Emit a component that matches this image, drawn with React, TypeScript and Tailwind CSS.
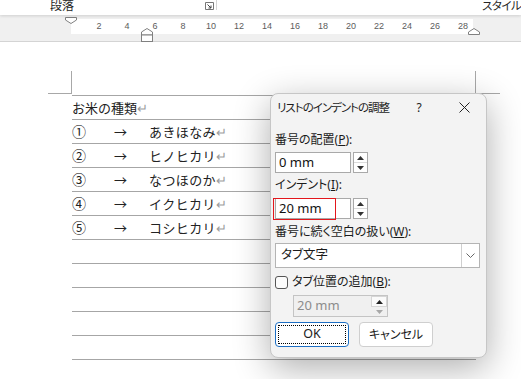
import React from "react";

const rulerNums = [2, 4, 6, 8, 10, 12, 14, 16, 18, 20, 22, 24, 26, 28];

const items = [
  { no: "①", name: "あきほなみ" },
  { no: "②", name: "ヒノヒカリ" },
  { no: "③", name: "なつほのか" },
  { no: "④", name: "イクヒカリ" },
  { no: "⑤", name: "コシヒカリ" },
];

function UpTri({ color = "#333" }: { color?: string }) {
  return (
    <svg width="7" height="4" viewBox="0 0 7 4" aria-hidden>
      <polygon points="0,4 3.5,0 7,4" fill={color} />
    </svg>
  );
}

function DownTri({ color = "#333" }: { color?: string }) {
  return (
    <svg width="7" height="4" viewBox="0 0 7 4" aria-hidden>
      <polygon points="0,0 7,0 3.5,4" fill={color} />
    </svg>
  );
}

function Spinner() {
  return (
    <div className="ml-[2px] flex h-[21px] w-[15px] flex-col border border-[#a9a9a9] bg-white">
      <div className="flex flex-1 items-center justify-center border-b border-[#dcdcdc]">
        <UpTri />
      </div>
      <div className="flex flex-1 items-center justify-center">
        <DownTri />
      </div>
    </div>
  );
}

function Field({ value, marked }: { value: string; marked?: boolean }) {
  return (
    <div className="relative flex">
      <div className="flex h-[21px] w-[76px] items-center border border-[#a9a9a9] bg-white pl-[3px] text-[13px] text-[#111]">
        {value}
      </div>
      <Spinner />
      {marked && (
        <div className="absolute left-[-2px] top-0 h-[22px] w-[63px] border-[1.5px] border-[#e3161c]" />
      )}
    </div>
  );
}

function Dialog() {
  return (
    <div className="absolute left-[270px] top-[93px] flex h-[265px] w-[217px] flex-col rounded-[8px] border border-[#c6c6c6] bg-[#f3f3f3] px-[4px] text-[12px] text-[#1b1b1b] shadow-[0_10px_36px_rgba(0,0,0,0.32)] [font-feature-settings:'palt'] font-['Noto_Sans','Noto_Sans_CJK_JP',sans-serif]">
      {/* title bar */}
      <div className="flex h-[27px] items-center">
        <span className="ml-[2px] flex-1 whitespace-nowrap text-[11.5px] tracking-[-1px]">リストのインデントの調整</span>
        <span className="w-[12px] text-center text-[12px]">?</span>
        <span className="ml-[25px] mr-[4px] flex w-[28px] items-center justify-center">
          <svg width="11" height="11" viewBox="0 0 11 11" aria-hidden>
            <path d="M0.5 0.5 L10.5 10.5 M10.5 0.5 L0.5 10.5" stroke="#222" strokeWidth="1" fill="none" />
          </svg>
        </span>
      </div>

      <div className="mt-[11px] h-[16px] leading-[16px]">
        番号の配置(<span className="underline">P</span>):
      </div>
      <div className="mt-[4px]">
        <Field value="0 mm" />
      </div>

      <div className="mt-[4px] h-[16px] leading-[16px]">
        インデント(<span className="underline">I</span>):
      </div>
      <div className="mt-[5px]">
        <Field value="20 mm" marked />
      </div>

      <div className="mt-[5px] h-[16px] leading-[16px]">
        番号に続く空白の扱い(<span className="underline">W</span>):
      </div>
      <div className="mt-[3px] flex h-[25px] w-[205px] border border-[#b4b4b4] bg-white">
        <div className="flex flex-1 items-center pl-[5px] text-[12.5px]">タブ文字</div>
        <div className="flex w-[18px] items-center justify-center border-l border-[#cfcfcf]">
          <svg width="9" height="5" viewBox="0 0 9 5" aria-hidden>
            <polyline points="0.5,0.5 4.5,4.5 8.5,0.5" stroke="#666" strokeWidth="1" fill="none" />
          </svg>
        </div>
      </div>

      <div className="mt-[6px] flex h-[16px] items-center">
        <div className="h-[13px] w-[13px] rounded-[3px] border border-[#555] bg-[#fbfbfb]" />
        <span className="ml-[4px] leading-[16px]">
          タブ位置の追加(<span className="underline">B</span>):
        </span>
      </div>

      <div className="ml-[18px] mt-[5px] flex h-[22px] w-[95px] border border-[#c4c4c4] bg-[#f0f0f0]">
        <div className="flex flex-1 items-center pl-[3px] text-[13px] text-[#8c8c8c]">20 mm</div>
        <div className="flex w-[16px] flex-col">
          <div className="flex flex-1 items-center justify-center border border-[#d6d6d6] bg-[#fafafa]">
            <UpTri color="#222" />
          </div>
          <div className="flex flex-1 items-center justify-center">
            <DownTri color="#a8a8a8" />
          </div>
        </div>
      </div>

      <div className="mt-[5px] flex">
        <div className="flex h-[25px] w-[74px] rounded-[4px] border border-[#1d6fc4] bg-white p-[2px]">
          <div className="flex flex-1 items-center justify-center border border-dotted border-black text-[12.5px]">
            OK
          </div>
        </div>
        <div className="ml-[10px] flex h-[25px] w-[74px] items-center justify-center rounded-[4px] border border-[#cfcfcf] bg-white text-[12px]">
          キャンセル
        </div>
      </div>
    </div>
  );
}

export default function App() {
  return (
    <div className="relative h-[379px] w-[521px] overflow-hidden bg-white font-['Noto_Sans_CJK_JP',sans-serif]">
      {/* ribbon */}
      <div className="relative z-10 flex h-[15px] items-start bg-white shadow-[0_1px_3px_rgba(0,0,0,0.14)]">
        <span className="ml-[50px] mt-[-3px] shrink-0 whitespace-nowrap text-[12px] leading-[16px] text-[#262626]">
          段落
        </span>
        <svg className="ml-[131px] mt-[2px] shrink-0" width="9" height="8" viewBox="0 0 9 8" aria-hidden>
          <path d="M0.5 7.5 V0.5 H8.5 V7.5 H0.5" stroke="#777" strokeWidth="1" fill="none" />
          <path d="M2.5 2.5 L6 6 M6 3.5 V6 H3.5" stroke="#444" strokeWidth="1" fill="none" />
        </svg>
        <div className="ml-[2px] h-[10px] w-px shrink-0 bg-[#d5d5d5]" />
        <span className="ml-[265px] mt-[-3px] shrink-0 whitespace-nowrap text-[11.5px] leading-[16px] tracking-[-0.5px] text-[#262626] [font-feature-settings:'palt']">
          スタイル
        </span>
      </div>

      {/* ruler */}
      <div className="relative h-[27px] border-b border-[#d4d4d4] bg-[#f0f0f0] pt-[4px]">
        <div className="ml-[71px] flex h-[15px] w-[402px] bg-white pl-[14px]">
          {rulerNums.map((n) => (
            <span
              key={n}
              className="w-[28px] shrink-0 text-center font-['Liberation_Sans',sans-serif] text-[9px] leading-[15px] text-[#5c5c5c]"
            >
              {n}
            </span>
          ))}
        </div>
        <svg className="absolute left-[65px] top-[2px]" width="12" height="7" viewBox="0 0 12 7" aria-hidden>
          <polygon points="0.5,0.5 11.5,0.5 11.5,3 6,6.5 0.5,3" fill="#fff" stroke="#808080" />
        </svg>
        <svg className="absolute left-[141px] top-[13px]" width="12" height="14" viewBox="0 0 12 14" aria-hidden>
          <polygon points="0.5,7 0.5,4 6,0.5 11.5,4 11.5,7" fill="#fff" stroke="#808080" />
          <rect x="0.5" y="7" width="11" height="6.5" fill="#fff" stroke="#808080" />
        </svg>
        <svg className="absolute left-[468px] top-[13px]" width="12" height="7" viewBox="0 0 12 7" aria-hidden>
          <polygon points="0.5,6.5 0.5,4 6,0.5 11.5,4 11.5,6.5" fill="#fff" stroke="#808080" />
        </svg>
      </div>

      {/* page */}
      <div className="pt-[29px]">
        <div className="flex">
          <div className="ml-[48px] h-[23px] w-[24px] border-b border-r border-[#a8a8a8]" />
          <div className="ml-[403px] h-[23px] w-[25px] border-b border-l border-[#a8a8a8]" />
        </div>
        <div className="ml-[72px] mt-[1px] w-[404px] border-t border-[#a6a6a6] text-[13px] text-[#222]">
          <div className="flex h-[24px] items-center border-b border-[#a6a6a6]">
            <span>お米の種類</span>
            <span className="text-[#9c9c9c]">↵</span>
          </div>
          {items.map((it) => (
            <div key={it.no} className="flex h-[24px] items-center border-b border-[#a6a6a6]">
              <span className="w-[41px] text-[14px]">{it.no}</span>
              <span className="w-[36px] pl-[1px]">→</span>
              <span className="tracking-[0.4px]">{it.name}</span>
              <span className="text-[#9c9c9c]">↵</span>
            </div>
          ))}
          {[0, 1, 2, 3, 4].map((i) => (
            <div key={i} className="h-[24px] border-b border-[#a6a6a6]" />
          ))}
        </div>
      </div>

      <Dialog />
    </div>
  );
}
